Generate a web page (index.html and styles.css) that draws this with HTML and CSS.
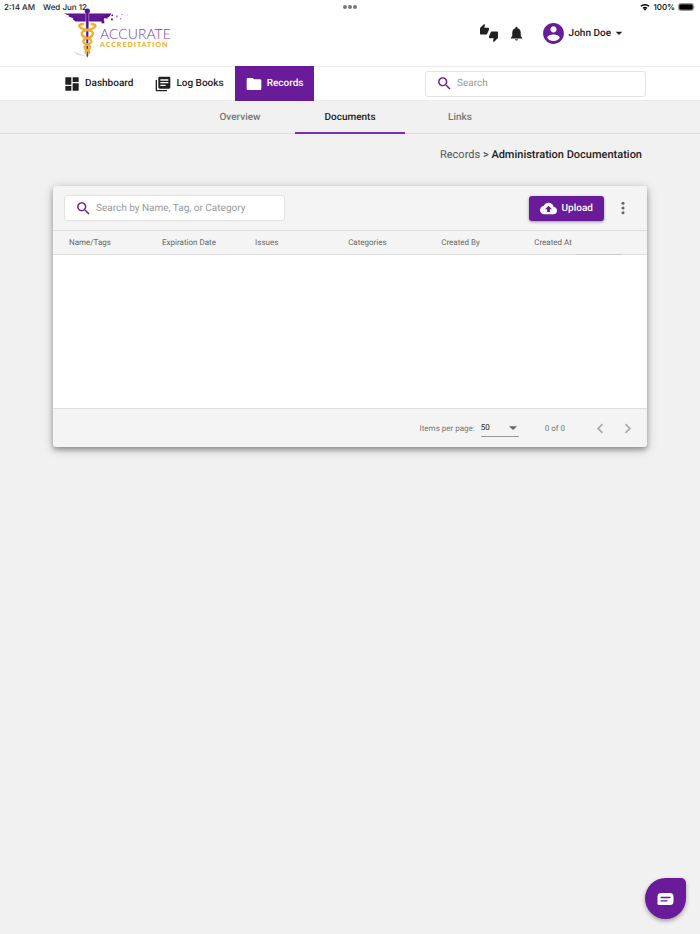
FILE: index.html
```html
<!DOCTYPE html>
<html lang="en">
	<head>
		<meta charset="utf-8">
		<meta name="viewport" content="width=device-width, initial-scale=1">
		<title>Administration Documentation</title>
		<link rel="stylesheet" href="styles.css">
	</head>
	<body>
		<!-- device status bar, lies over the header -->
		<div class="status">
			<div class="status-left"><span>2:14 AM</span><span>Wed Jun 12</span></div>
			<div class="dots"><i></i><i></i><i></i></div>
			<div class="status-right">
				<svg width="10" height="8" viewBox="0 0 20 15"><path d="M10 15l3-3.300a4.300 4.300 0 0 0-6 0zM4.800 9.300l1.800 1.900a5 5 0 0 1 6.800 0l1.800-1.900a7.500 7.500 0 0 0-10.400 0zM.8 5.200l2 2a10.300 10.300 0 0 1 14.400 0l2-2a13.300 13.300 0 0 0-18.400 0z"/></svg>
				<span>100%</span>
				<svg width="18" height="8" viewBox="0 0 18 8"><rect x=".5" y=".5" width="15" height="7" rx="2" fill="none" stroke="#999"/><rect x="1.200" y="1.200" width="13.600" height="5.600" rx="1.200"/><path d="M16.500 2.800q1.200 1.200 0 2.400z" fill="#999"/></svg>
			</div>
		</div>

		<header class="header">
			<a href="#" class="logo" aria-label="Accurate Accreditation">
				<svg width="112" height="52" viewBox="62 8 112 52">
					<g fill="#5b0f8b">
						<path d="M64 13.500h47.500l-2.500 3.500-5 1.500-.5 3H75.500l-3-2.500 1-.8-5-1.700 1-.8z"/>
						<rect x="101.500" y="20.500" width="2.800" height="2.800"/>
						<rect x="105.500" y="16.500" width="2" height="2"/>
						<rect x="111" y="18.500" width="1.800" height="1.800"/>
						<rect x="111.500" y="14.500" width="1.600" height="1.600"/>
						<rect x="116" y="15.500" width="1.800" height="1.800" fill="#a77fc4"/>
						<rect x="120" y="18" width="1.400" height="1.400" fill="#a77fc4"/>
						<rect x="121.500" y="14" width="1.200" height="1.200" fill="#a77fc4"/>
						<rect x="127" y="14.500" width="1.200" height="1" fill="#c9b3da"/>
					</g>
					<path d="M72 15.200h13M74 17.200h11M76 19.200h9M90 15.200h15M90 17.200h12M90 19.200h10" stroke="#7d43a3" stroke-width=".4"/>
					<path d="M72 51l14.500 5.500-9-1.800z" fill="#d9d4df"/>
					<path d="M85.800 12h3v12l-.6 32-.9 2-.9-2-.6-32z" fill="#5b0f8b" stroke="#fff" stroke-width=".4"/>
					<circle cx="87.300" cy="11" r="2.600" fill="#5b0f8b"/>
					<g fill="none" stroke="#efaf2d" stroke-linecap="round" stroke-width="2.300">
						<path d="M83 24q-5.500.8-3.200 3t7.500 3q6.500 1 5.500 4.500-1 2.700-5.500 3.700-5 1.300-3.800 4 .8 1.600 4 2.500 3.800 1.500 2 4-.9 1.200-2.400 1.700-2.300 1-1 2.600"/>
						<path d="M91.600 24q5.500.8 3.200 3t-7.500 3q-6.500 1-5.500 4.500 1 2.700 5.500 3.700 5 1.300 3.800 4-.8 1.600-4 2.500-3.800 1.500-2 4 .9 1.200 2.400 1.700 2.300 1 1.500 2.600"/>
					</g>
					<text x="100" y="39" class="logo-name">ACCURATE</text>
					<text x="100" y="47" class="logo-sub">ACCREDITATION</text>
				</svg>
			</a>
			<div class="user-area">
				<button type="button" class="icon-btn" aria-label="Feedback">
					<svg width="18" height="18" viewBox="0 0 24 24"><path d="M12 6c0-.55-.45-1-1-1H5.820l.66-3.180.02-.23c0-.31-.13-.59-.33-.8L5.380 0 .44 4.940C.17 5.210 0 5.590 0 6v6.500c0 .83.670 1.500 1.500 1.500h6.750c.62 0 1.150-.38 1.380-.91l2.260-5.290c.07-.17.11-.36.11-.55V6zm10.500 4h-6.750c-.62 0-1.150.38-1.380.91l-2.260 5.290c-.07.17-.11.36-.11.55V18c0 .55.450 1 1 1h5.180l-.66 3.180-.02.24c0 .31.130.59.330.8l.79.780 4.940-4.940c.27-.27.44-.65.440-1.060v-6.500c0-.83-.67-1.500-1.500-1.500z"/></svg>
				</button>
				<button type="button" class="icon-btn" aria-label="Notifications">
					<svg width="17" height="17" viewBox="0 0 24 24"><path d="M12 22c1.100 0 2-.9 2-2h-4c0 1.100.890 2 2 2zm6-6v-5c0-3.070-1.640-5.640-4.500-6.320V4c0-.83-.67-1.500-1.500-1.500s-1.500.67-1.500 1.500v.68C7.630 5.360 6 7.920 6 11v5l-2 2v1h16v-1l-2-2z"/></svg>
				</button>
				<button type="button" class="user">
					<svg class="avatar" width="25" height="25" viewBox="0 0 24 24"><path d="M12 2C6.480 2 2 6.480 2 12s4.480 10 10 10 10-4.480 10-10S17.520 2 12 2zm0 3c1.660 0 3 1.340 3 3s-1.340 3-3 3-3-1.340-3-3 1.340-3 3-3zm0 14.200c-2.500 0-4.710-1.280-6-3.220.03-1.990 4-3.080 6-3.080 1.990 0 5.970 1.090 6 3.080-1.290 1.940-3.500 3.220-6 3.220z"/></svg>
					<span>John Doe</span>
					<svg width="16" height="16" viewBox="0 0 24 24"><path d="M7 10l5 5 5-5z"/></svg>
				</button>
			</div>
		</header>

		<nav class="nav">
			<a href="#" class="nav-item">
				<svg width="16" height="16" viewBox="0 0 24 24"><path d="M2 13h9V2H2v11zm0 9h9v-7H2v7zm11 0h9V11h-9v11zm0-20v7h9V2h-9z"/></svg>
				<span>Dashboard</span>
			</a>
			<a href="#" class="nav-item">
				<svg width="16" height="16" viewBox="0 0 24 24"><path d="M3 6H1v15c0 1.100.9 2 2 2h15v-2H3V6zm18-5H7c-1.100 0-2 .9-2 2v14c0 1.100.9 2 2 2h14c1.100 0 2-.9 2-2V3c0-1.100-.9-2-2-2zm-1 10H8V9h12v2zm-4 4H8v-2h8v2zm4-8H8V5h12v2z"/></svg>
				<span>Log Books</span>
			</a>
			<a href="#" class="nav-item active">
				<svg width="16" height="16" viewBox="0 0 24 24"><path d="M10 3H3c-1.100 0-2 .9-2 2v14c0 1.100.9 2 2 2h18c1.100 0 2-.9 2-2V7c0-1.100-.9-2-2-2h-9l-2-2z"/></svg>
				<span>Records</span>
			</a>
			<label class="search">
				<svg width="17" height="17" viewBox="0 0 24 24"><path d="M15.500 14h-.79l-.28-.27C15.410 12.590 16 11.110 16 9.500 16 5.910 13.090 3 9.500 3S3 5.910 3 9.500 5.910 16 9.500 16c1.610 0 3.090-.59 4.230-1.570l.27.280v.79l5 4.990L20.490 19l-4.990-5zm-6 0C7.010 14 5 11.990 5 9.500S7.010 5 9.500 5 14 7.010 14 9.500 11.990 14 9.500 14z"/></svg>
				<input type="text" placeholder="Search" aria-label="Search">
			</label>
		</nav>

		<div class="tabs">
			<a href="#" class="tab">Overview</a>
			<a href="#" class="tab active">Documents</a>
			<a href="#" class="tab">Links</a>
		</div>

		<main class="main">
			<div class="crumbs"><a href="#">Records</a> &gt; <b>Administration Documentation</b></div>

			<section class="card">
				<div class="toolbar">
					<label class="search">
						<svg width="17" height="17" viewBox="0 0 24 24"><path d="M15.500 14h-.79l-.28-.27C15.410 12.590 16 11.110 16 9.500 16 5.910 13.090 3 9.500 3S3 5.910 3 9.500 5.910 16 9.500 16c1.610 0 3.090-.59 4.230-1.570l.27.280v.79l5 4.990L20.490 19l-4.990-5zm-6 0C7.010 14 5 11.990 5 9.500S7.010 5 9.500 5 14 7.010 14 9.500 11.990 14 9.500 14z"/></svg>
						<input type="text" placeholder="Search by Name, Tag, or Category" aria-label="Search documents">
					</label>
					<button type="button" class="upload">
						<svg width="17" height="17" viewBox="0 0 24 24"><path d="M19.350 10.040C18.670 6.590 15.640 4 12 4 9.110 4 6.600 5.640 5.350 8.040 2.340 8.360 0 10.910 0 14c0 3.310 2.690 6 6 6h13c2.760 0 5-2.240 5-5 0-2.640-2.050-4.780-4.650-4.960zM14 13v4h-4v-4H7l5-5 5 5h-3z"/></svg>
						<span>Upload</span>
					</button>
					<button type="button" class="icon-btn more" aria-label="More">
						<svg width="16" height="16" viewBox="0 0 24 24"><circle cx="12" cy="5" r="2.300"/><circle cx="12" cy="12" r="2.300"/><circle cx="12" cy="19" r="2.300"/></svg>
					</button>
				</div>
				<div class="table-head">
					<table class="table">
						<thead>
							<tr>
								<th>Name/Tags</th>
								<th>Expiration Date</th>
								<th>Issues</th>
								<th>Categories</th>
								<th>Created By</th>
								<th class="sorted">Created At</th>
								<td></td>
							</tr>
						</thead>
					</table>
				</div>
				<div class="table-body"></div>
				<div class="pager">
					<label for="size">Items per page:</label>
					<div class="size">
						<select id="size">
							<option>10</option>
							<option>25</option>
							<option selected>50</option>
						</select>
						<svg width="16" height="16" viewBox="0 0 24 24"><path d="M6 9.500l6 5.500 6-5.500z"/></svg>
					</div>
					<span class="range">0 of 0</span>
					<button type="button" class="icon-btn" aria-label="Previous page" disabled>
						<svg width="17" height="17" viewBox="0 0 24 24"><path d="M15.700 6.700L14 5l-7 7 7 7 1.700-1.700L10.400 12z"/></svg>
					</button>
					<button type="button" class="icon-btn" aria-label="Next page" disabled>
						<svg width="17" height="17" viewBox="0 0 24 24"><path d="M10 5L8.300 6.700 13.600 12l-5.300 5.300L10 19l7-7z"/></svg>
					</button>
				</div>
			</section>
		</main>

		<button type="button" class="chat" aria-label="Chat">
			<svg width="17" height="14" viewBox="0 0 17 14"><path d="M4 1h9a3.500 3.500 0 0 1 3.500 3.500v5A3.500 3.500 0 0 1 13 13H2A1.500 1.500 0 0 1 .5 11.500v-7A3.500 3.500 0 0 1 4 1z" fill="#fff"/><path d="M4 5.500h9M4 8.800h6" stroke="#6a1b9a" stroke-width="1.300" stroke-linecap="round"/></svg>
		</button>
	</body>
</html>
```
FILE: styles.css
```css
*{
	margin: 0;
	padding: 0;
	box-sizing: border-box;
}
body{
	min-height: 100vh;
	background-color: #f1f1f1;
	color: #212121;
	font-family: Roboto, "Liberation Sans", sans-serif;
	font-size: 10px;
	text-rendering: geometricPrecision;
}
svg{
	display: block;
	flex: none;
	fill: currentColor;
}
a{
	color: inherit;
	text-decoration: none;
}
button, input, select{
	font: inherit;
	color: inherit;
	text-rendering: inherit;
	border: 0;
	background: none;
}
button{
	cursor: pointer;
}

/* status bar */
.status{
	position: absolute;
	top: 0;
	left: 0;
	right: 0;
	z-index: 10;
	display: grid;
	grid-template-columns: 1fr auto 1fr;
	align-items: center;
	height: 14px;
	padding: 0 4px;
	font-family: Inter, sans-serif;
	font-size: 8px;
	font-weight: 500;
}
.status-left{
	display: flex;
	gap: 8px;
}
.status-right{
	display: flex;
	align-items: center;
	justify-content: flex-end;
	gap: 3px;
	color: #000;
}
.dots{
	display: flex;
	gap: 1px;
}
.dots i{
	width: 4px;
	height: 4px;
	border-radius: 50%;
	background-color: #777;
}

/* header */
.header{
	display: flex;
	justify-content: space-between;
	align-items: center;
	height: 66px;
	padding: 0 73px 0 62px;
	background-color: #fff;
}
.logo{
	padding-top: 2px;
}
.logo-name{
	font: 300 14px Lato, sans-serif;
	fill: #7b3fa5;
}
.logo-sub{
	font: 900 7px Lato, sans-serif;
	letter-spacing: 1px;
	fill: #f0b02e;
}
.user-area{
	display: flex;
	align-items: center;
	gap: 10px;
}
.icon-btn{
	display: flex;
	align-items: center;
	justify-content: center;
}
.user{
	display: flex;
	align-items: center;
	margin-left: 6px;
	font-weight: 500;
}
.avatar{
	margin-right: 3px;
	color: #6a1b9a;
}

/* nav */
.nav{
	display: flex;
	align-items: center;
	height: 35px;
	padding: 0 54px 0 53px;
	border-top: 1px solid #ececec;
	border-bottom: 1px solid #ececec;
	background-color: #fff;
}
.nav-item{
	display: flex;
	align-items: center;
	gap: 5px;
	height: 35px;
	padding: 0 11px;
	font-weight: 500;
}
.nav-item.active{
	background-color: #6a1b9a;
	color: #fff;
}
.search{
	display: flex;
	align-items: center;
	gap: 4px;
	width: 221px;
	height: 26px;
	padding: 0 10px;
	border: 1px solid #e3e3e3;
	border-radius: 3px;
	background-color: #fff;
	color: #6a1b9a;
}
.nav .search{
	margin-left: auto;
}
.search input{
	flex: 1;
	min-width: 0;
	outline: none;
	color: #212121;
}
.search input::placeholder{
	color: #999;
}

/* tabs */
.tabs{
	display: flex;
	justify-content: center;
	height: 33px;
	border-bottom: 1px solid #dcdcdc;
}
.tab{
	width: 110px;
	height: 33px;
	line-height: 33px;
	text-align: center;
	font-weight: 500;
	color: #777;
}
.tab.active{
	border-bottom: 2px solid #7b2fb0;
	color: #212121;
}

.main{
	padding: 13px 53px;
}
.crumbs{
	padding-right: 5px;
	line-height: 16px;
	font-size: 11px;
	text-align: right;
}
.crumbs a{
	color: #555;
}
.crumbs b{
	font-weight: 500;
}

/* documents card */
.card{
	margin-top: 23px;
	border-radius: 3px;
	background-color: #f4f4f4;
	box-shadow: 0 3px 5px rgba(0,0,0,0.3), 0 2px 12px rgba(0,0,0,0.2);
}
.toolbar{
	display: flex;
	align-items: center;
	height: 44px;
	padding: 0 16px 0 11px;
}
.upload{
	display: flex;
	align-items: center;
	gap: 5px;
	height: 25px;
	margin-left: auto;
	padding: 0 11px;
	border-radius: 3px;
	background-color: #6a1b9a;
	box-shadow: 0 1px 3px rgba(0,0,0,0.4);
	color: #fff;
	font-weight: 500;
}
.more{
	margin-left: 11px;
	color: #666;
}
.table-head{
	padding-left: 16px;
	border-top: 1px solid #dedede;
	border-bottom: 1px solid #dedede;
}
.table{
	width: 100%;
	table-layout: fixed;
	border-collapse: collapse;
}
.table th{
	width: 16.1%;
	height: 23px;
	text-align: left;
	font-size: 8px;
	font-weight: 400;
	color: #666;
}
.table .sorted{
	position: relative;
}
.sorted::after{
	content: "";
	position: absolute;
	left: 42px;
	bottom: -1px;
	width: 45px;
	height: 1px;
	background-color: #ccc;
}
.table-body{
	min-height: 153px;
	background-color: #fff;
}
.pager{
	display: flex;
	align-items: center;
	justify-content: flex-end;
	height: 39px;
	padding-right: 11px;
	border-top: 1px solid #dedede;
	font-size: 8px;
	color: #777;
}
.size{
	position: relative;
	width: 38px;
	margin: 0 26px 0 6px;
	border-bottom: 1px solid #999;
	color: #212121;
}
.size select{
	width: 100%;
	height: 17px;
	appearance: none;
	outline: none;
}
.size svg{
	position: absolute;
	right: -2px;
	top: 1px;
	color: #666;
	pointer-events: none;
}
.range{
	margin-right: 27px;
}
.pager .icon-btn{
	color: #aaa;
}
.pager .icon-btn + .icon-btn{
	margin-left: 10px;
}

/* chat bubble */
.chat{
	position: fixed;
	right: 14px;
	bottom: 15px;
	display: flex;
	align-items: center;
	justify-content: center;
	width: 41px;
	height: 41px;
	border-radius: 50% 5px 50% 50%;
	background-color: #6a1b9a;
	box-shadow: 0 2px 4px rgba(0,0,0,0.35);
}
```
